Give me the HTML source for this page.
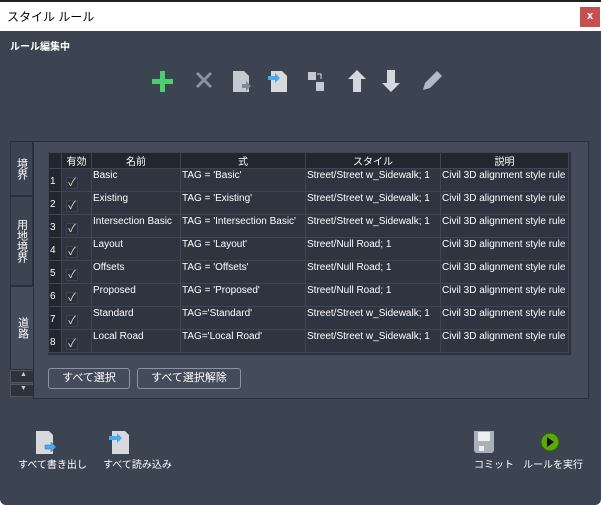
<!DOCTYPE html>
<html><head><meta charset="utf-8"><style>
*{margin:0;padding:0;box-sizing:border-box}
body{width:601px;height:505px;overflow:hidden;background:#fff;font-family:"Liberation Sans","Noto Sans CJK JP",sans-serif;position:relative}
.abs{position:absolute}
#title{left:0;top:0;width:601px;height:31px;background:#fff;border-top:2px solid #222}
#title span{position:absolute;left:7px;top:6px;font-size:12px;color:#000}
#close{right:1px;top:7px;width:20px;height:20px;background:#c74f50;color:#fff;font-size:11px;text-align:center;line-height:19px;font-weight:bold}
#body{left:0;top:31px;width:601px;height:474px;background:#3c4452;border-radius:0 0 6px 6px}
.wt{color:#fff;font-size:11px;white-space:nowrap}
#panel{left:33px;top:141px;width:556px;height:258px;background:#444c5c;border:1px solid #2a2f38}
#grid{left:48px;top:152px;width:523px;height:203px;background:#2b303a}
table{border-collapse:collapse;position:absolute;left:48px;top:152px;font-size:10px;color:#fff}
td,th{border:1px solid #3e4654;vertical-align:top;padding:1px 1px;white-space:nowrap;overflow:hidden}
th{height:15px;font-weight:normal;background:#22262e;text-align:center;padding:0}
td{height:23px;background:#2f3540}
td.n{background:#22262e;vertical-align:middle;padding-top:4px}
td.c{vertical-align:middle;background:#2f3540}
.cb{display:inline-block;width:12px;height:12px;background:#2a2f38;border:1px solid #3c4250;color:#ddd;font-size:11px;line-height:11px;text-align:center;margin:6px 0 0 3px}
.btn{border:1px solid #8a93a3;border-radius:3px;color:#fff;font-size:11px;text-align:center;line-height:19px;height:21px}
.tab{background:#3c4452;border:1px solid #2a2f38;color:#fff;font-size:11px;display:flex;align-items:center;justify-content:center}
.tab span{writing-mode:vertical-rl;white-space:nowrap;line-height:12px}
</style></head><body>
<div id="title" class="abs"><span>スタイル ルール</span></div>
<div id="close" class="abs">x</div>
<div id="body" class="abs"></div>
<div class="abs wt" style="left:10px;top:38px;font-weight:bold;font-size:10px">ルール編集中</div>
<svg class="abs" style="left:150px;top:68px" width="300" height="30">
<path d="M10 3h5v8h8v5h-8v8h-5v-8h-8v-5h8z" fill="#4ccf6a"/>
<path d="M47 5l14 14M61 5l-14 14" stroke="#8a929e" stroke-width="3"/>
<path d="M83 3h11l5 5v16h-16z" fill="#c5cad2"/><path d="M92 16h4v-3l5 5-5 5v-3h-4z" fill="#7f8896"/>
<path d="M121 3h11l5 5v16h-16z" fill="#d7d9dd"/><path d="M118 8h7v-3l5 5-5 5v-3h-7z" fill="#4aa9ee"/>
<rect x="158" y="4" width="8" height="8" fill="#c5cad2"/><rect x="166" y="14" width="8" height="9" fill="#c5cad2"/><path d="M167 6h4v5" stroke="#ddd" fill="none"/>
<path d="M207 2l9 9h-5v13h-8v-13h-5z" fill="#d3d8e0"/>
<path d="M241 24l9-9h-5v-13h-8v13h-5z" fill="#d3d8e0"/>
<path d="M273 22l2-7 12-12 5 5-12 12z" fill="#b4bac4"/>
</svg>
<div class="abs tab" style="left:10px;top:141px;width:23px;height:55px"><span>境界</span></div>
<div class="abs tab" style="left:10px;top:196px;width:23px;height:90px"><span>用地境界</span></div>
<div class="abs tab" style="left:10px;top:286px;width:24px;height:84px;background:#444c5c;border-right:none"><span>道路</span></div>
<div class="abs" style="left:10px;top:370px;width:27px;height:13px;background:#2d323c;border:1px solid #555;color:#ccc;font-size:7px;text-align:center">▲</div>
<div class="abs" style="left:10px;top:384px;width:27px;height:13px;background:#2d323c;border:1px solid #555;color:#ccc;font-size:7px;text-align:center">▼</div>
<div id="panel" class="abs"></div>
<div id="grid" class="abs"></div>
<table>
<tr><th style="width:13px"></th><th style="width:30px">有効</th><th style="width:89px">名前</th><th style="width:125px">式</th><th style="width:135px">スタイル</th><th style="width:128px">説明</th></tr>
<tr><td class="n">1</td><td class="c"><span class="cb">✓</span></td><td>Basic</td><td>TAG = 'Basic'</td><td>Street/Street w_Sidewalk; 1</td><td>Civil 3D alignment style rule</td></tr>
<tr><td class="n">2</td><td class="c"><span class="cb">✓</span></td><td>Existing</td><td>TAG = 'Existing'</td><td>Street/Street w_Sidewalk; 1</td><td>Civil 3D alignment style rule</td></tr>
<tr><td class="n">3</td><td class="c"><span class="cb">✓</span></td><td>Intersection Basic</td><td>TAG = 'Intersection Basic'</td><td>Street/Street w_Sidewalk; 1</td><td>Civil 3D alignment style rule</td></tr>
<tr><td class="n">4</td><td class="c"><span class="cb">✓</span></td><td>Layout</td><td>TAG = 'Layout'</td><td>Street/Null Road; 1</td><td>Civil 3D alignment style rule</td></tr>
<tr><td class="n">5</td><td class="c"><span class="cb">✓</span></td><td>Offsets</td><td>TAG = 'Offsets'</td><td>Street/Null Road; 1</td><td>Civil 3D alignment style rule</td></tr>
<tr><td class="n">6</td><td class="c"><span class="cb">✓</span></td><td>Proposed</td><td>TAG = 'Proposed'</td><td>Street/Null Road; 1</td><td>Civil 3D alignment style rule</td></tr>
<tr><td class="n">7</td><td class="c"><span class="cb">✓</span></td><td>Standard</td><td>TAG='Standard'</td><td>Street/Street w_Sidewalk; 1</td><td>Civil 3D alignment style rule</td></tr>
<tr><td class="n">8</td><td class="c"><span class="cb">✓</span></td><td>Local Road</td><td>TAG='Local Road'</td><td>Street/Street w_Sidewalk; 1</td><td>Civil 3D alignment style rule</td></tr>
</table>
<div class="abs btn" style="left:48px;top:368px;width:82px">すべて選択</div>
<div class="abs btn" style="left:137px;top:368px;width:104px">すべて選択解除</div>
<svg class="abs" style="left:30px;top:428px" width="540" height="28">
<path d="M6 3h13l4 4v19h-17z" fill="#d7d9dd"/><path d="M15 17h6v-3l5 5-5 5v-3h-6z" fill="#4aa9ee" stroke="#2a6ea0" stroke-width=".5"/>
<path d="M82 3h13l4 4v19h-17z" fill="#d7d9dd"/><path d="M79 8h8v-3l5 5-5 5v-3h-8z" fill="#4aa9ee"/>
<path d="M444 3h20v20l-2 2h-16l-2-2z" fill="#aab0ba"/><rect x="448" y="4" width="12" height="9" fill="#eee"/><rect x="449" y="18" width="5" height="5" fill="#eee"/>
<circle cx="520" cy="14" r="9" fill="#5aa80c" stroke="#2c5a06"/><path d="M517 9l7 5-7 5z" fill="#111"/>
</svg>
<div class="abs wt" style="left:18px;top:456px;font-size:10px">すべて書き出し</div>
<div class="abs wt" style="left:103px;top:456px;font-size:10px">すべて読み込み</div>
<div class="abs wt" style="left:474px;top:456px;font-size:10px">コミット</div>
<div class="abs wt" style="left:523px;top:456px;font-size:10px">ルールを実行</div>
</body></html>
